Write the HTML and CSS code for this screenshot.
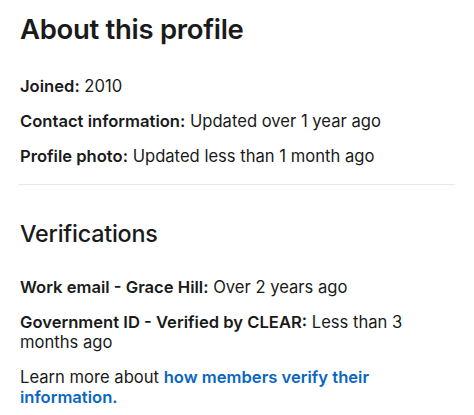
FILE: index.html
```html
<!DOCTYPE html>
<html>
<head>
<meta charset="utf-8">
<link rel="stylesheet" href="styles.css">
</head>
<body>
<main class="panel">
  <section class="section about">
    <h1 class="title">About this profile</h1>
    <div class="rows">
      <p class="row"><b>Joined:</b> 2010</p>
      <p class="row"><b>Contact information:</b> Updated over 1 year ago</p>
      <p class="row"><b>Profile photo:</b> Updated less than 1 month ago</p>
    </div>
  </section>
  <hr class="divider">
  <section class="section verif">
    <h2 class="subtitle">Verifications</h2>
    <div class="rows">
      <p class="row"><b>Work email - Grace Hill:</b> Over 2 years ago</p>
      <p class="row"><b>Government ID - Verified by CLEAR:</b> Less than 3 months ago</p>
      <p class="row">Learn more about <a class="link" href="#">how members verify their information.</a></p>
    </div>
  </section>
</main>
</body>
</html>
```
FILE: styles.css
```css
html, body {
  margin: 0;
  padding: 0;
  background: #ffffff;
}
body {
  font-family: Inter, "Noto Sans", sans-serif;
  color: #1a1a1a;
}
.panel {
  padding: 12px 19px 0 20px;
  width: 400px;
}
.title {
  margin: 0;
  font-size: 27.5px;
  line-height: 34px;
  font-weight: 600;
  letter-spacing: -0.3px;
}
.subtitle {
  margin: 0;
  font-size: 23.3px;
  line-height: 30px;
  font-weight: 500;
  letter-spacing: -0.2px;
}
.rows {
  display: flex;
  flex-direction: column;
  gap: 15px;
}
.about .rows {
  margin-top: 30px;
}
.verif .rows {
  margin-top: 28px;
}
.row {
  margin: 0;
  font-size: 16.6px;
  line-height: 20px;
}
.row b {
  font-weight: 600;
}
.divider {
  border: 0;
  height: 1px;
  background: #e8e8e8;
  margin: 18px 0 34px -2px;
  width: 437px;
}
.link {
  color: #0a66c2;
  font-weight: 600;
  text-decoration: none;
}
```
